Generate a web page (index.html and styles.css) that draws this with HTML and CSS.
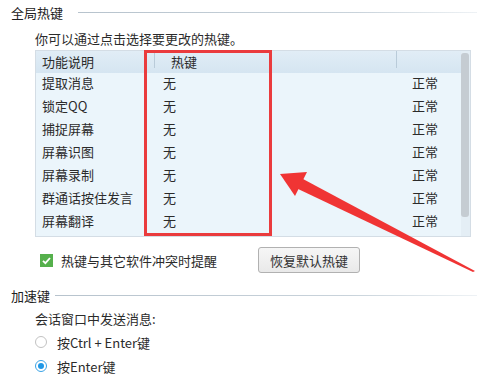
FILE: index.html
```html
<!DOCTYPE html>
<html>
    <head>
        <meta http-equiv="Content-Type" content="text/html; charset=utf-8">
        <title>热键设置</title>
        <link rel="stylesheet" href="styles.css">
    </head>
    <body>
        <div class="page">
            <div class="group-title">
                <span>全局热键</span>
                <span class="rule"></span>
            </div>

            <div class="group-body">
                <p class="hint">你可以通过点击选择要更改的热键。</p>

                <div class="table-wrap">
                    <div class="table">
                        <div class="row head">
                            <span class="c1">功能说明</span>
                            <span class="c2">热键</span>
                            <span class="c3"></span>
                        </div>
                        <div class="row"><span class="c1">提取消息</span><span class="c2">无</span><span class="c3">正常</span></div>
                        <div class="row"><span class="c1">锁定QQ</span><span class="c2">无</span><span class="c3">正常</span></div>
                        <div class="row"><span class="c1">捕捉屏幕</span><span class="c2">无</span><span class="c3">正常</span></div>
                        <div class="row"><span class="c1">屏幕识图</span><span class="c2">无</span><span class="c3">正常</span></div>
                        <div class="row"><span class="c1">屏幕录制</span><span class="c2">无</span><span class="c3">正常</span></div>
                        <div class="row"><span class="c1">群通话按住发言</span><span class="c2">无</span><span class="c3">正常</span></div>
                        <div class="row"><span class="c1">屏幕翻译</span><span class="c2">无</span><span class="c3">正常</span></div>
                    </div>
                    <div class="scrollbar"><div class="thumb"></div></div>
                    <div class="mark"></div>
                </div>

                <div class="options">
                    <label class="check">
                        <span class="box">
                            <svg width="13" height="13" viewBox="0 0 13 13">
                                <path d="M3 6.8 L5.4 9.2 L10 4" fill="none" stroke="#fff" stroke-width="1.8"/>
                            </svg>
                        </span>
                        热键与其它软件冲突时提醒
                    </label>
                    <button class="btn">恢复默认热键</button>
                </div>
            </div>

            <div class="group-title second">
                <span>加速键</span>
                <span class="rule"></span>
            </div>

            <div class="group-body">
                <p class="sub">会话窗口中发送消息:</p>
                <label class="radio"><span class="dot"></span>按Ctrl + Enter键</label>
                <label class="radio"><span class="dot on"></span>按Enter键</label>
            </div>

            <svg class="arrow" width="477" height="391" viewBox="0 0 477 391">
                <polygon points="280,174 307,172 295,196" fill="#f03434"/>
                <polygon points="303,179 296,188 473,272 475,271" fill="#f03434"/>
            </svg>
        </div>
    </body>
</html>
```

FILE: styles.css
```css
body {
    margin: 0;
    background: #fff;
    color: #2b2b2b;
    font-family: "Noto Sans CJK SC", "Liberation Sans", sans-serif;
    font-size: 13px;
}

.page {
    position: relative;
    width: 477px;
    height: 391px;
    overflow: hidden;
}

.group-title {
    display: flex;
    align-items: center;
    height: 24px;
    padding-left: 11px;
    color: #222;
}

.group-title .rule {
    flex: 1;
    height: 1px;
    margin-left: 15px;
    background: linear-gradient(to right, #b7c3cd, #c9d3db 70%, #eef2f5);
}

.group-title.second {
    margin-top: 10px;
}

.group-title.second .rule {
    margin-left: 5px;
}

.group-body {
    padding-left: 35px;
}

.hint {
    margin: 3px 0 0;
    height: 23px;
    line-height: 23px;
}

.table-wrap {
    position: relative;
    display: flex;
    width: 434px;
    height: 185px;
    border: 1px solid #d4dde5;
    background: #ebf5fb;
}

.table {
    flex: 1;
}

.row {
    display: flex;
    height: 23px;
    line-height: 20px;
}

.row.head {
    height: 22px;
    line-height: 22px;
    background: linear-gradient(#e1edf6, #d5e5f1);
}

.c1 {
    width: 118px;
    padding-left: 6px;
    box-sizing: border-box;
}

.c2 {
    width: 242px;
    padding-left: 9px;
    box-sizing: border-box;
}

.c3 {
    flex: 1;
    padding-left: 16px;
}

.head .c2 {
    padding-left: 16px;
    border-left: 1px solid #b9cbd9;
    height: 17px;
    line-height: 22px;
}

.head .c3 {
    border-left: 1px solid #b9cbd9;
    height: 17px;
}

.scrollbar {
    width: 9px;
    padding-top: 2px;
    background: #e4eef5;
}

.thumb {
    width: 8px;
    height: 164px;
    border-radius: 3px;
    background: #c5ccd2;
}

.mark {
    position: absolute;
    left: 108px;
    top: -1px;
    width: 122px;
    height: 180px;
    border: 3px solid #ea3b3d;
}

.options {
    display: flex;
    align-items: center;
    height: 26px;
    margin-top: 10px;
}

.check {
    display: flex;
    align-items: center;
    gap: 8px;
    padding-left: 5px;
}

.box {
    display: block;
    width: 13px;
    height: 13px;
    background: #55b04c;
}

.box svg {
    display: block;
}

.btn {
    margin-left: 41px;
    width: 102px;
    height: 26px;
    padding: 0;
    border: 1px solid #b1b1b1;
    border-radius: 3px;
    background: linear-gradient(#f6f6f6, #e9e9e9);
    color: #333;
    font-family: inherit;
    font-size: 13px;
}

.sub {
    margin: 0;
    height: 23px;
    line-height: 23px;
}

.radio {
    display: flex;
    align-items: center;
    gap: 10px;
    height: 24px;
}

.dot {
    display: block;
    width: 10px;
    height: 10px;
    border: 1px solid #c2c2c2;
    border-radius: 50%;
    background: #fff;
    position: relative;
}

.dot.on {
    border-color: #3aa3e6;
}

.dot.on::after {
    content: "";
    position: absolute;
    left: 2px;
    top: 2px;
    width: 6px;
    height: 6px;
    border-radius: 50%;
    background: #1f97e6;
}

.arrow {
    position: absolute;
    left: 0;
    top: 0;
    pointer-events: none;
}
```
